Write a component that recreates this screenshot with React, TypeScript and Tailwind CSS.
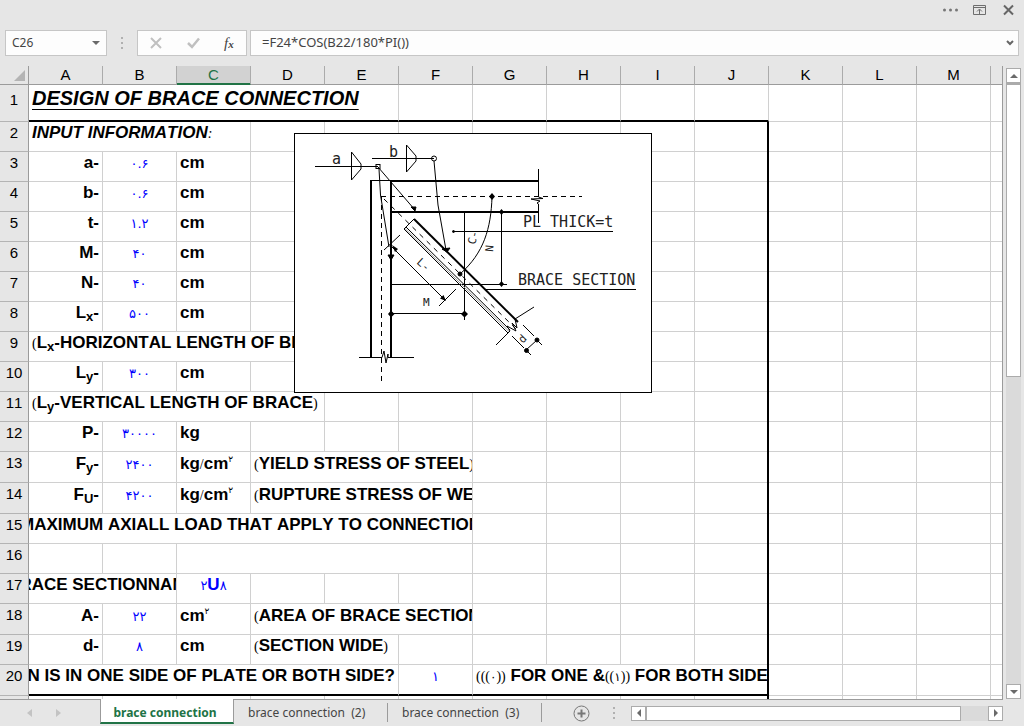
import React, { useState } from 'react';
import clsx from 'clsx';

const COLUMNS = ['A', 'B', 'C', 'D', 'E', 'F', 'G', 'H', 'I', 'J', 'K', 'L', 'M', 'N', 'O', 'P'];
const FRAME_END = 10; // the framed block covers columns A to J

type Align = 'left' | 'right' | 'center';

interface CellData {
  col: number;
  span?: number;
  align?: Align;
  content: React.ReactNode;
}

interface RowData {
  height: string;
  cells?: CellData[];
}

// Brackets and digits come from a smaller Persian face
const Small = ({ children }: { children: React.ReactNode }) => (
  <span className="font-['DejaVu_Sans',sans-serif] text-[12px] font-normal">{children}</span>
);

const Paren = ({ children }: { children: React.ReactNode }) => (
  <span className="font-['Liberation_Serif',serif] text-[14px] font-normal">{children}</span>
);

const Num = ({ children }: { children: React.ReactNode }) => (
  <span className="font-['DejaVu_Sans',sans-serif] text-[13px] font-normal text-[#0000ff]">{children}</span>
);

const Sub = ({ children }: { children: React.ReactNode }) => (
  <sub className="text-[13px] leading-none">{children}</sub>
);

const Squared = () => (
  <span className="align-super font-['DejaVu_Sans',sans-serif] text-[9px] font-normal leading-none">۲</span>
);

const KgCm2 = () => (
  <>
    kg<Paren>/</Paren>cm<Squared />
  </>
);

const input = (label: React.ReactNode, value: string, unit: React.ReactNode): CellData[] => [
  { col: 1, align: 'right', content: <>{label}-</> },
  { col: 2, align: 'center', content: <Num>{value}</Num> },
  { col: 3, content: unit },
];

const ROWS: RowData[] = [
  {
    height: 'h-[37px]',
    cells: [
      {
        col: 1,
        span: 5,
        content: (
          <span className="text-[20px] italic leading-[26px] underline decoration-1 underline-offset-4">
            DESIGN OF BRACE CONNECTION
          </span>
        ),
      },
    ],
  },
  {
    height: 'h-[30px]',
    cells: [{ col: 1, span: 3, content: <span className="italic">INPUT INFORMATION<Paren>:</Paren></span> }],
  },
  { height: 'h-[30px]', cells: input('a', '۰.۶', 'cm') },
  { height: 'h-[30px]', cells: input('b', '۰.۶', 'cm') },
  { height: 'h-[30px]', cells: input('t', '۱.۲', 'cm') },
  { height: 'h-[30px]', cells: input('M', '۴۰', 'cm') },
  { height: 'h-[30px]', cells: input('N', '۴۰', 'cm') },
  { height: 'h-[30px]', cells: input(<>L<Sub>x</Sub></>, '۵۰۰', 'cm') },
  {
    height: 'h-[30px]',
    cells: [
      {
        col: 1,
        span: 5,
        content: <><Paren>(</Paren>L<Sub>x</Sub>-HORIZONTAL LENGTH OF BRACE<Paren>)</Paren></>,
      },
    ],
  },
  { height: 'h-[30px]', cells: input(<>L<Sub>y</Sub></>, '۳۰۰', 'cm') },
  {
    height: 'h-[30px]',
    cells: [
      {
        col: 1,
        span: 4,
        content: <><Paren>(</Paren>L<Sub>y</Sub>-VERTICAL LENGTH OF BRACE<Paren>)</Paren></>,
      },
    ],
  },
  { height: 'h-[30px]', cells: input('P', '۳۰۰۰۰', 'kg') },
  {
    height: 'h-[31px]',
    cells: [
      ...input(<>F<Sub>y</Sub></>, '۲۴۰۰', <KgCm2 />),
      { col: 4, span: 3, content: <><Paren>(</Paren>YIELD STRESS OF STEEL<Paren>)</Paren></> },
    ],
  },
  {
    height: 'h-[31px]',
    cells: [
      ...input(<>F<Sub>U</Sub></>, '۴۲۰۰', <KgCm2 />),
      { col: 4, span: 3, content: <><Paren>(</Paren>RUPTURE STRESS OF WELD<Paren>)</Paren></> },
    ],
  },
  {
    height: 'h-[30px]',
    cells: [{ col: 1, span: 6, align: 'center', content: 'MAXIMUM AXIALL LOAD THAT APPLY TO CONNECTION' }],
  },
  { height: 'h-[30px]', cells: [{ col: 3, span: 4, content: null }] },
  {
    height: 'h-[30px]',
    cells: [
      { col: 1, span: 2, align: 'center', content: 'BRACE SECTIONNAME' },
      {
        col: 3,
        align: 'center',
        content: <span className="text-[#0000ff]"><Num>۲</Num>U<Num>۸</Num></span>,
      },
    ],
  },
  {
    height: 'h-[31px]',
    cells: [
      ...input('A', '۲۲', <>cm<Squared /></>),
      { col: 4, span: 3, content: <><Paren>(</Paren>AREA OF BRACE SECTION<Paren>)</Paren></> },
    ],
  },
  {
    height: 'h-[30px]',
    cells: [
      ...input('d', '۸', 'cm'),
      { col: 4, span: 2, content: <><Paren>(</Paren>SECTION WIDE<Paren>)</Paren></> },
    ],
  },
  {
    height: 'h-[31px]',
    cells: [
      { col: 1, span: 5, align: 'right', content: 'SECTION IS IN ONE SIDE OF PLATE OR BOTH SIDE?' },
      { col: 6, align: 'center', content: <Num>۱</Num> },
      {
        col: 7,
        span: 4,
        content: (
          <>
            <Paren>(((</Paren><Small>۰</Small><Paren>))</Paren> FOR ONE &amp;
            <Paren>((</Paren><Small>۱</Small><Paren>))</Paren> FOR BOTH SIDE
          </>
        ),
      },
    ],
  },
  { height: 'h-[30px]' },
];

const SheetRow = ({ row, index }: { row: RowData; index: number }) => {
  const number = index + 1;
  const cells: React.ReactNode[] = [];
  let col = 1;
  while (col <= COLUMNS.length) {
    const data = row.cells?.find((c) => c.col === col);
    const span = data?.span ?? 1;
    const last = col + span - 1;
    const thickBottom = (number === 1 || number === 20) && last <= FRAME_END;
    const thickRight = number > 1 && last === FRAME_END;
    cells.push(
      <td
        key={col}
        colSpan={span}
        className={clsx(
          'overflow-hidden p-0 align-top',
          thickBottom && 'border-b-2 border-b-black',
          !thickBottom && thickRight && 'shadow-[inset_0_-1px_#d0d0d0]',
          !thickBottom && !thickRight && 'border-b border-b-[#d0d0d0]',
          thickRight ? 'border-r-2 border-r-black' : 'border-r border-r-[#d0d0d0]',
        )}
      >
        {data?.content && (
          <div
            className={clsx(
              'flex overflow-hidden whitespace-nowrap text-[17px] font-bold',
              row.height === 'h-[31px]' && number < 20 ? 'leading-[24px]' : 'leading-[22px]',
              data.align === 'right' && 'justify-end pr-[3px]',
              data.align === 'center' && 'justify-center',
              (!data.align || data.align === 'left') && 'pl-[3px]',
            )}
          >
            <div className="shrink-0 whitespace-pre">{data.content}</div>
          </div>
        )}
      </td>,
    );
    col += span;
  }
  return (
    <tr className={row.height}>
      <th
        scope="row"
        className={clsx(
          'border-b border-r border-b-[#b4b4b4] border-r-[#9b9b9b] bg-[#e6e6e6] p-0 text-center align-top text-[15px] font-normal',
          number === 1 ? 'leading-[30px]' : 'leading-[22px]',
        )}
      >
        {number}
      </th>
      {cells}
    </tr>
  );
};

// Drawing of the gusset plate with the brace, column and beam
const BraceDiagram = () => (
  <svg
    viewBox="0 0 358 260"
    className="absolute left-[294px] top-[67px] h-[260px] w-[358px] bg-white"
    fill="none"
    stroke="#000"
    strokeWidth="1"
  >
    <rect x="0.5" y="0.5" width="357" height="259" />
    {/* weld symbols */}
    <path d="M21 33.5H84M57.500 19V47M57.500 19L67 31V36L57.500 47" />
    <path d="M78 25.500H140M112.500 12V39M112.500 12L122 23V28L112.500 39" />
    <rect x="82" y="31.500" width="4" height="4" />
    <circle cx="140" cy="25.500" r="2.500" />
    <path d="M84 34L121 77M85 36L86.500 62L95 114M140 28L144 72L152 117" />
    <path d="M121 78L122 74H117ZM153 119L156 115L148 116ZM97 127L100 122H94Z" fill="#000" />
    {/* column */}
    <path d="M77 47V224M97 47V224M97 48H245M97 79H245" strokeWidth="2" />
    <path d="M76 47.500H97M65 224.500H88L90 218L92 230L94 221L94 224.500H120" />
    <path d="M87.500 63V250M87 63.500H288" strokeDasharray="5 4" />
    <path d="M244.500 36V64L249 65.500L237 66L246 68L243 70L244.500 71V90" />
    {/* gusset plate */}
    <path d="M170.500 78V187M97 151.500H213M207.500 78V151M97 180.500H170" />
    <path d="M97 177.500L100.500 181L97 184.500L94 181ZM170.500 177.500L174 181L170.500 184.500L167 181ZM207.500 76L210 79L207.500 82L205 79ZM207.500 148L210 151L207.500 154L205 151ZM198 60L201 63.500L198 67L195 63.500Z" fill="#000" stroke="none" />
    {/* brace */}
    <path d="M120 86L224 189" strokeWidth="2" />
    <path d="M120 86L110 96L214 200M112 94L216 197" />
    <path d="M111 95.500L215 198.500" stroke="#999" />
    <path d="M90 66L222 196" strokeDasharray="5 5" />
    <path d="M202 212L216 198L213 193L222 198L218 190L223 195L221 186L240 174" />
    <path d="M229 192L240 203M242 206L248 212M218 203L230 215M232 217L237 222M243 207L232 217" />
    <circle cx="243" cy="207" r="2" fill="#000" />
    <circle cx="232.500" cy="217.500" r="2" fill="#000" />
    {/* dimension along the brace */}
    <path d="M98 114L150 166M90 117L106 102M145 173L162 156" />
    <path d="M152 168L149.500 162L146 165.500ZM98 112L104 116L101 119Z" fill="#000" stroke="none" />
    <path d="M198 64C197 95 190 120 166 141" />
    <circle cx="166" cy="141" r="2" fill="#000" />
    <path d="M159 98.500H319M191 156.500H342M188 153L191 156.500" />
    <circle cx="159.500" cy="98.500" r="1" fill="#000" />
    <g fill="#222" stroke="none" className="font-['DejaVu_Sans_Mono',monospace] text-[15px]">
      <text x="229" y="94">PL THICK=t</text>
      <text x="224" y="152">BRACE SECTION</text>
      <text x="38" y="31">a</text>
      <text x="95" y="24">b</text>
    </g>
    <g fill="#222" stroke="none" className="font-['DejaVu_Sans_Mono',monospace] text-[11px]">
      <text x="129" y="173">M</text>
      <text transform="translate(122 130) rotate(42)">L-</text>
      <text transform="translate(199 119) rotate(-85)">N</text>
      <text transform="translate(181 112) rotate(-75)">C-</text>
      <text transform="translate(226 208) rotate(-45)" y="4">d</text>
    </g>
  </svg>
);

const Arrow = ({ d }: { d: string }) => (
  <svg viewBox="0 0 8 8" className="h-2 w-2" fill="#6a6a6a">
    <path d={d} />
  </svg>
);

const Grip = () => (
  <div className="flex flex-col gap-[3px]">
    <span className="h-[2px] w-[2px] bg-[#b0b0b0]" />
    <span className="h-[2px] w-[2px] bg-[#b0b0b0]" />
    <span className="h-[2px] w-[2px] bg-[#b0b0b0]" />
  </div>
);

const WindowControls = () => (
  <div className="flex h-[30px] items-start justify-end gap-[15px] pr-[10px] pt-[3px]">
    <button aria-label="More options" className="flex h-[14px] items-center">
      <svg viewBox="0 0 15 14" className="h-[14px] w-[15px]" fill="#777">
        <circle cx="1.500" cy="7" r="1.500" />
        <circle cx="7.500" cy="7" r="1.500" />
        <circle cx="13.500" cy="7" r="1.500" />
      </svg>
    </button>
    <button aria-label="Ribbon display options">
      <svg viewBox="0 0 13 14" className="h-[14px] w-[13px]" fill="none" stroke="#6e6e6e">
        <path d="M0.500 2.500H12.500V11.500H0.500ZM0.500 4.500H12.500M6.500 11V6.500M4 8.500L6.500 6L9 8.500" />
      </svg>
    </button>
    <button aria-label="Close" className="ml-[2px]">
      <svg viewBox="0 0 11 14" className="h-[14px] w-[11px]" fill="none" stroke="#666" strokeWidth="2">
        <path d="M1 2.500L10 11.500M10 2.500L1 11.500" />
      </svg>
    </button>
  </div>
);

const FormulaBar = () => (
  <div className="flex h-[26px] pl-[5px] pr-[5px] text-[12px] text-[#444]">
    <div className="flex w-[102px] items-center border border-[#c6c6c6] bg-[#fdfdfd] pl-[6px] pr-[6px]">
      <input aria-label="Name box" defaultValue="C26" className="w-full min-w-0 flex-1 bg-transparent outline-none" />
      <button aria-label="Show names">
        <Arrow d="M0 2H8L4 6Z" />
      </button>
    </div>
    <div className="flex w-[30px] items-center justify-center">
      <Grip />
    </div>
    <div className="flex w-[110px] items-center justify-around border border-[#c6c6c6] bg-[#fdfdfd]">
      <button aria-label="Cancel">
        <svg viewBox="0 0 12 12" className="h-3 w-3" fill="none" stroke="#c0c0c0" strokeWidth="2">
          <path d="M1 1L11 11M11 1L1 11" />
        </svg>
      </button>
      <button aria-label="Enter">
        <svg viewBox="0 0 13 12" className="h-3 w-[13px]" fill="none" stroke="#c0c0c0" strokeWidth="2.500">
          <path d="M1 6L5 10L12 1.500" />
        </svg>
      </button>
      <button
        aria-label="Insert function"
        className="font-['Liberation_Serif',serif] text-[15px] italic leading-4 text-[#444]"
      >
        f<span className="text-[11px] font-bold">x</span>
      </button>
    </div>
    <div className="ml-[3px] flex min-w-0 flex-1 items-center border border-[#c6c6c6] bg-[#fdfdfd] pl-[11px] pr-[4px]">
      <input
        aria-label="Formula"
        defaultValue="=F24*COS(B22/180*PI())"
        className="min-w-0 flex-1 bg-transparent text-[13px] outline-none"
      />
      <button aria-label="Expand formula bar">
        <svg viewBox="0 0 8 8" className="h-2 w-2" fill="none" stroke="#666" strokeWidth="2">
          <path d="M1 2L4 5L7 2" />
        </svg>
      </button>
    </div>
  </div>
);

const Sheet = () => (
  <div className="relative min-w-0 flex-1 overflow-hidden border-r border-[#9b9b9b] bg-white">
    <table className="w-px table-fixed border-separate border-spacing-0 font-['Liberation_Sans',Arial,sans-serif] text-black [font-kerning:none]">
      <colgroup>
        <col className="w-[29px]" />
        {COLUMNS.map((name) => (
          <col key={name} className="w-[74px]" />
        ))}
      </colgroup>
      <thead>
        <tr className="h-[19px]">
          <th aria-label="Select all" className="border-b border-r border-[#9b9b9b] bg-[#e6e6e6] p-0">
            <svg viewBox="0 0 28 18" className="h-[18px] w-[28px]" fill="#b4b4b4">
              <path d="M25 4V15H14Z" />
            </svg>
          </th>
          {COLUMNS.map((name) => (
            <th
              key={name}
              scope="col"
              className={clsx(
                'border-b border-r border-r-[#ababab] p-0 text-[15px] font-normal leading-[18px]',
                name === 'C'
                  ? 'border-b-[#217346] bg-[#d2d2d2] text-[#217346] shadow-[inset_0_-1px_#217346]'
                  : 'border-b-[#9b9b9b] bg-[#e6e6e6]',
              )}
            >
              {name}
            </th>
          ))}
        </tr>
      </thead>
      <tbody>
        {ROWS.map((row, i) => (
          <SheetRow key={i} row={row} index={i} />
        ))}
      </tbody>
    </table>
    <BraceDiagram />
  </div>
);

const VerticalScroll = () => (
  <div className="flex w-[21px] shrink-0 flex-col bg-[#e6e6e6] pl-[3px] pr-[3px] pt-[2px]">
    <button aria-label="Scroll up" className="flex h-[15px] items-center justify-center border border-[#ababab] bg-white">
      <Arrow d="M0 6H8L4 2Z" />
    </button>
    <div className="flex-1 bg-[#dadada]">
      <div className="h-[49%] border border-t-2 border-[#ababab] bg-white" />
    </div>
    <button aria-label="Scroll down" className="flex h-[15px] items-center justify-center border border-[#ababab] bg-white">
      <Arrow d="M0 2H8L4 6Z" />
    </button>
  </div>
);

const TABS = ['brace connection', 'brace connection  (2)', 'brace connection  (3)'];

const TabBar = () => {
  const [active, setActive] = useState(0);
  return (
    <div className="flex h-[27px] shrink-0 bg-[#e6e6e6]">
      <div className="flex w-[100px] items-center gap-5 border-t border-[#9b9b9b] pl-[26px]">
        <button aria-label="Previous sheet">
          <svg viewBox="0 0 8 8" className="h-2 w-2" fill="#c3c3c3"><path d="M6 0V8L1 4Z" /></svg>
        </button>
        <button aria-label="Next sheet">
          <svg viewBox="0 0 8 8" className="h-2 w-2" fill="#c3c3c3"><path d="M2 0V8L7 4Z" /></svg>
        </button>
      </div>
      <div role="tablist" className="flex text-[12px]">
        {TABS.map((tab, i) =>
          i === active ? (
            <button
              key={tab}
              role="tab"
              aria-selected
              className="h-[25px] w-[134px] whitespace-pre border-x border-b-2 border-x-[#9b9b9b] border-b-[#217346] bg-white pr-1 pt-1 font-bold leading-[18px] text-[#217346]"
            >
              {tab}
            </button>
          ) : (
            <button
              key={tab}
              role="tab"
              aria-selected={false}
              onClick={() => setActive(i)}
              className="flex w-[154px] items-start border-t border-[#9b9b9b] pt-[3px] text-[#444]"
            >
              <span className="h-[19px] flex-1 whitespace-pre border-r border-[#9b9b9b] pl-[14px] text-left leading-5">
                {tab}
              </span>
            </button>
          ),
        )}
      </div>
      <div className="flex min-w-0 flex-1 items-center border-t border-[#9b9b9b] pl-[31px]">
        <button aria-label="New sheet">
          <svg viewBox="0 0 17 17" className="h-[17px] w-[17px]" fill="none" stroke="#777">
            <circle cx="8.500" cy="8.500" r="7.500" />
            <path d="M8.500 4.500V12.500M4.500 8.500H12.500" strokeWidth="2" />
          </svg>
        </button>
        <div className="ml-[23px] mr-4">
          <Grip />
        </div>
        <div className="flex h-[15px] min-w-0 flex-1 bg-[#dadada]">
          <button aria-label="Scroll left" className="flex w-[15px] items-center justify-center border border-[#ababab] bg-white">
            <Arrow d="M6 0V8L2 4Z" />
          </button>
          <div className="flex-1">
            <div className="h-full w-[92%] border border-[#ababab] bg-white" />
          </div>
          <button aria-label="Scroll right" className="flex w-[15px] items-center justify-center border border-[#ababab] bg-white">
            <Arrow d="M2 0V8L6 4Z" />
          </button>
        </div>
      </div>
      <div className="w-[21px] shrink-0" />
    </div>
  );
};

const App: React.FC = () => (
  <div className="flex h-screen flex-col bg-[#e6e6e6] font-['Noto_Sans',sans-serif]">
    <WindowControls />
    <FormulaBar />
    <div className="mt-[10px] flex min-h-0 flex-1">
      <Sheet />
      <VerticalScroll />
    </div>
    <TabBar />
  </div>
);

export default App;
